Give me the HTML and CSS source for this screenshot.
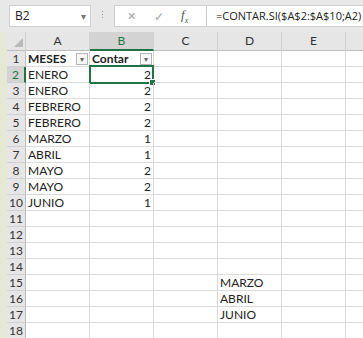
FILE: index.html
```html
<!DOCTYPE html>
<html lang="es">
<head>
  <meta charset="UTF-8">
  <title>CONTAR.SI</title>
  <link rel="stylesheet" href="styles.css">
</head>
<body>
  <div class="formula-bar">
    <div class="name-box">B2<span class="caret">&#9662;</span></div>
    <div class="dots"><i></i><i></i><i></i></div>
    <div class="buttons">
      <span class="btn-x">&#10005;</span>
      <span class="btn-ok">&#10003;</span>
      <span class="btn-fx">f<sub>x</sub></span>
    </div>
    <div class="formula">=CONTAR.SI($A$2:$A$10;A2)</div>
  </div>

  <div class="workarea">
    <div class="strip"></div>
    <div class="sheet">
      <div class="corner"><span class="tri"></span></div>
      <div class="colh">A</div><div class="colh sel">B</div><div class="colh">C</div><div class="colh">D</div><div class="colh">E</div><div class="colh"></div>

      <div class="rowh">1</div><div class="c head">MESES<span class="filter">&#9662;</span></div><div class="c head">Contar<span class="filter">&#9662;</span></div><div class="c"></div><div class="c"></div><div class="c"></div><div class="c"></div>
      <div class="rowh sel">2</div><div class="c">ENERO</div><div class="c num active">2</div><div class="c"></div><div class="c"></div><div class="c"></div><div class="c"></div>
      <div class="rowh">3</div><div class="c">ENERO</div><div class="c num">2</div><div class="c"></div><div class="c"></div><div class="c"></div><div class="c"></div>
      <div class="rowh">4</div><div class="c">FEBRERO</div><div class="c num">2</div><div class="c"></div><div class="c"></div><div class="c"></div><div class="c"></div>
      <div class="rowh">5</div><div class="c">FEBRERO</div><div class="c num">2</div><div class="c"></div><div class="c"></div><div class="c"></div><div class="c"></div>
      <div class="rowh">6</div><div class="c">MARZO</div><div class="c num">1</div><div class="c"></div><div class="c"></div><div class="c"></div><div class="c"></div>
      <div class="rowh">7</div><div class="c">ABRIL</div><div class="c num">1</div><div class="c"></div><div class="c"></div><div class="c"></div><div class="c"></div>
      <div class="rowh">8</div><div class="c">MAYO</div><div class="c num">2</div><div class="c"></div><div class="c"></div><div class="c"></div><div class="c"></div>
      <div class="rowh">9</div><div class="c">MAYO</div><div class="c num">2</div><div class="c"></div><div class="c"></div><div class="c"></div><div class="c"></div>
      <div class="rowh">10</div><div class="c">JUNIO</div><div class="c num">1</div><div class="c"></div><div class="c"></div><div class="c"></div><div class="c"></div>
      <div class="rowh">11</div><div class="c"></div><div class="c"></div><div class="c"></div><div class="c"></div><div class="c"></div><div class="c"></div>
      <div class="rowh">12</div><div class="c"></div><div class="c"></div><div class="c"></div><div class="c"></div><div class="c"></div><div class="c"></div>
      <div class="rowh">13</div><div class="c"></div><div class="c"></div><div class="c"></div><div class="c"></div><div class="c"></div><div class="c"></div>
      <div class="rowh">14</div><div class="c"></div><div class="c"></div><div class="c"></div><div class="c"></div><div class="c"></div><div class="c"></div>
      <div class="rowh">15</div><div class="c"></div><div class="c"></div><div class="c"></div><div class="c">MARZO</div><div class="c"></div><div class="c"></div>
      <div class="rowh">16</div><div class="c"></div><div class="c"></div><div class="c"></div><div class="c">ABRIL</div><div class="c"></div><div class="c"></div>
      <div class="rowh">17</div><div class="c"></div><div class="c"></div><div class="c"></div><div class="c">JUNIO</div><div class="c"></div><div class="c"></div>
      <div class="rowh">18</div><div class="c"></div><div class="c"></div><div class="c"></div><div class="c"></div><div class="c"></div><div class="c"></div>
    </div>
  </div>
</body>
</html>
```

FILE: styles.css
```css
* {
  box-sizing: border-box;
}
html, body {
  margin: 0;
  padding: 0;
  overflow: hidden;
}
body {
  width: 363px;
  height: 338px;
  font-family: Lato, "Liberation Sans", sans-serif;
  color: #222;
  background-color: #ffffff;
}

/* formula bar */
.formula-bar {
  height: 32px;
  background-color: #e8e8e8;
  display: flex;
  align-items: flex-start;
  padding-top: 5px;
  padding-left: 9px;
}
.name-box {
  flex-shrink: 0;
  width: 82px;
  height: 22px;
  background-color: #fff;
  border: 1px solid #cfcfcf;
  font-family: "Open Sans", sans-serif;
  font-size: 12px;
  line-height: 20px;
  padding-left: 5px;
  display: flex;
  justify-content: space-between;
}
.caret {
  color: #777;
  font-size: 10px;
  padding-right: 4px;
}
.dots {
  flex-shrink: 0;
  width: 23px;
  display: flex;
  flex-direction: column;
  align-items: center;
  gap: 2px;
  padding-top: 6px;
}
.dots i {
  width: 1px;
  height: 1px;
  background-color: #999;
}
.buttons {
  flex-shrink: 0;
  width: 92px;
  height: 22px;
  background-color: #fff;
  border: 1px solid #cfcfcf;
  border-right: none;
  display: flex;
  align-items: center;
  color: #a5a5a5;
  font-size: 12px;
}
.btn-x {
  margin-left: 12px;
  font-size: 11px;
}
.btn-ok {
  margin-left: 18px;
  font-size: 12px;
}
.btn-fx {
  margin-left: 17px;
  color: #555;
  font-family: "Liberation Serif", serif;
  font-style: italic;
  font-size: 13px;
}
.btn-fx sub {
  font-size: 8px;
}
.formula {
  flex: 1;
  min-width: 0;
  height: 22px;
  background-color: #fff;
  border: 1px solid #cfcfcf;
  border-right: none;
  font-family: "Open Sans", sans-serif;
  font-size: 11px;
  line-height: 20px;
  padding-left: 9px;
  white-space: nowrap;
  overflow: hidden;
}

/* sheet */
.workarea {
  display: flex;
  overflow: hidden;
}
.strip {
  flex-shrink: 0;
  width: 7px;
  background-color: #e4e8d4;
}
.sheet {
  flex: 1;
  min-width: 0;
  display: grid;
  grid-template-columns: 19px repeat(5, 64px) 1fr;
  grid-template-rows: 19px;
  grid-auto-rows: 16px;
  font-size: 12px;
}
.sheet > :nth-child(7n) {
  border-right: none;
}
.corner, .colh {
  background-color: #e6e6e6;
  border-bottom: 1px solid #bdbdbd;
  border-right: 1px solid #d0d0d0;
}
.corner {
  position: relative;
}
.tri {
  position: absolute;
  right: 2px;
  bottom: 3px;
  width: 0;
  height: 0;
  border-left: 9px solid transparent;
  border-bottom: 9px solid #b9b9b9;
}
.colh {
  text-align: center;
  line-height: 18px;
  color: #333;
}
.colh.sel {
  background-color: #d3d3d3;
  color: #217346;
  border-bottom: 2px solid #217346;
}
.rowh {
  background-color: #e6e6e6;
  border-right: 1px solid #bdbdbd;
  border-bottom: 1px solid #d0d0d0;
  text-align: center;
  line-height: 15px;
  color: #333;
}
.rowh.sel {
  background-color: #d3d3d3;
  color: #217346;
  border-right: 2px solid #217346;
}
.c {
  border-right: 1px solid #dadada;
  border-bottom: 1px solid #dadada;
  line-height: 15px;
  padding: 0 2px;
  white-space: nowrap;
  position: relative;
}
.c.head {
  font-weight: bold;
}
.c.num {
  text-align: right;
  padding-right: 2px;
}
.filter {
  position: absolute;
  right: 1px;
  top: 2px;
  width: 12px;
  height: 12px;
  border: 1px solid #b5b5b5;
  background-color: #f7f7f7;
  color: #666;
  font-size: 8px;
  line-height: 10px;
  text-align: center;
  font-weight: normal;
}
.active::before {
  content: "";
  position: absolute;
  left: -1px;
  top: -2px;
  right: -1px;
  bottom: -2px;
  border: 2px solid #217346;
}
.active::after {
  content: "";
  position: absolute;
  right: -3px;
  bottom: -4px;
  width: 5px;
  height: 5px;
  background-color: #217346;
  border: 1px solid #fff;
}
```
